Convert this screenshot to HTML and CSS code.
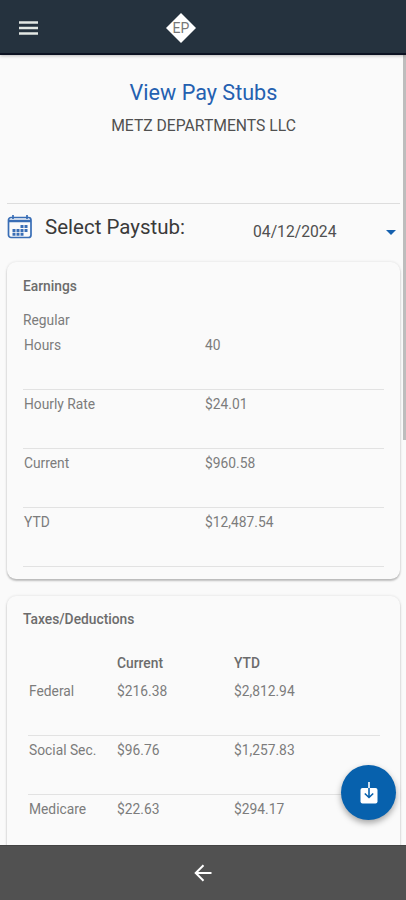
FILE: index.html
```html
<!DOCTYPE html>
<html lang="en">
<head>
    <meta charset="UTF-8">
    <title>View Pay Stubs</title>
    <link rel="stylesheet" href="styles.css">
</head>
<body>
    <div class="app">
        <header class="topbar">
            <svg class="menu" viewBox="0 0 19 14"><path d="M0 1.5h19M0 7h19M0 12.5h19"/></svg>
            <svg class="logo" viewBox="0 0 32 32">
                <path d="M16 1L31 16 16 31 1 16z"/>
                <text x="16" y="21" text-anchor="middle">EP</text>
            </svg>
        </header>

        <main class="page">
            <div class="heading">
                <h1>View Pay Stubs</h1>
                <p>METZ DEPARTMENTS LLC</p>
            </div>

            <div class="select">
                <svg class="calendar" viewBox="0 0 25 24">
                    <rect class="frame" x="1.5" y="2.5" width="22.500" height="20" rx="2.5"/>
                    <path class="bar" d="M2 6h22"/>
                    <path class="frame" d="M6 0v4M20 0v4"/>
                    <path class="days" d="M13.500 11.500h7M5.500 15.500h15M5.500 19.200h11"/>
                </svg>
                <span class="label">Select Paystub:</span>
                <span class="date">04/12/2024</span>
                <span class="arrow"></span>
            </div>

            <section class="card earnings">
                <h2>Earnings</h2>
                <p class="type">Regular</p>
                <div class="row"><span>Hours</span><span>40</span></div>
                <div class="row"><span>Hourly Rate</span><span>$24.01</span></div>
                <div class="row"><span>Current</span><span>$960.58</span></div>
                <div class="row"><span>YTD</span><span>$12,487.54</span></div>
            </section>

            <section class="card taxes">
                <h2>Taxes/Deductions</h2>
                <div class="row head"><span></span><span>Current</span><span>YTD</span></div>
                <div class="row"><span>Federal</span><span>$216.38</span><span>$2,812.94</span></div>
                <div class="row"><span>Social Sec.</span><span>$96.76</span><span>$1,257.83</span></div>
                <div class="row"><span>Medicare</span><span>$22.63</span><span>$294.17</span></div>
            </section>

            <div class="scrollbar"></div>
            <a class="download" href="#">
                <svg viewBox="0 0 18 22">
                    <rect x="0.500" y="6" width="17" height="15.500" rx="2"/>
                    <path class="stem" d="M9 0v6"/>
                    <path class="tip" d="M9 6v9M4.800 11.500L9 15.500l4.200-4"/>
                </svg>
            </a>
        </main>

        <footer class="navbar">
            <svg class="back" viewBox="0 0 18 18"><path d="M17.500 9H2M9.500 1.200L1.700 9l7.800 7.800"/></svg>
        </footer>
    </div>
</body>
</html>
```
FILE: styles.css
```css
* {
    box-sizing: border-box;
}
body {
    margin: 0;
    background: #fafafa;
    font-family: Roboto, "Liberation Sans", sans-serif;
    color: #7c7c7c;
}
h1, h2, p {
    margin: 0;
}
.app {
    display: flex;
    flex-direction: column;
    height: 900px;
    overflow: hidden;
}

/* top bar */
.topbar {
    display: flex;
    align-items: center;
    flex: none;
    height: 55px;
    padding: 3px 0 0 19px;
    background: #25323e;
    border-bottom: 2px solid #0c1222;
    box-shadow: 0 1px 3px rgba(0, 0, 0, .25);
    z-index: 1;
}
.menu {
    width: 19px;
    height: 14px;
    stroke: #e3e8e4;
    stroke-width: 2.4;
}
.logo {
    width: 32px;
    height: 32px;
    margin-left: 127px;
}
.logo path {
    fill: #fff;
}
.logo text {
    font-size: 14px;
    fill: #777;
}

/* page */
.page {
    position: relative;
    flex: 1;
    min-height: 0;
    padding: 0 6px 0 7px;
    overflow: hidden;
}
.heading {
    height: 149px;
    padding-top: 24px;
    border-bottom: 1px solid #ddd;
    text-align: center;
}
.heading h1 {
    font-size: 21.6px;
    line-height: 28px;
    font-weight: 400;
    color: #2460b0;
}
.heading p {
    margin-top: 9px;
    font-size: 15.7px;
    line-height: 20px;
    color: #505050;
}
.select {
    display: flex;
    height: 58px;
}
.calendar {
    flex: none;
    width: 25px;
    height: 24px;
    margin-top: 11px;
}
.calendar path,
.calendar rect {
    fill: none;
    stroke: #386db5;
    stroke-width: 1.7;
}
.calendar .bar {
    stroke-width: 2.5;
}
.calendar .days {
    stroke-width: 3;
    stroke-dasharray: 3 1;
}
.label {
    flex: none;
    width: 221px;
    padding: 8px 0 0 13px;
    font-size: 20.5px;
    line-height: 30px;
    color: #3a3a3a;
}
.date {
    flex: 1;
    padding-top: 18px;
    font-size: 15.7px;
    line-height: 20px;
    color: #505050;
}
.arrow {
    width: 0;
    height: 0;
    margin: 26px 4px 0 0;
    border: 5px solid transparent;
    border-top-color: #1560ae;
    border-bottom: 0;
}

/* cards */
.card {
    padding: 0 16px;
    border-radius: 9px;
    background: #fafafa;
    box-shadow: 0 2px 2px rgba(0, 0, 0, .22), 0 0 3px rgba(0, 0, 0, .12);
    font-size: 13.8px;
    line-height: 18px;
}
.card h2 {
    font-size: 13.8px;
    line-height: 18px;
    font-weight: 500;
    color: #6c6c6c;
}
.earnings {
    height: 317px;
    padding-top: 15px;
}
.type {
    margin-top: 16px;
}
.row {
    display: grid;
    grid-template-columns: 181px 1fr;
    height: 59px;
    padding: 5px 0 0 1px;
    border-bottom: 1px solid #e2e2e2;
}
.type + .row {
    height: 61px;
    padding-top: 7px;
}
.taxes {
    height: 400px;
    margin-top: 17px;
    padding-top: 14px;
}
.taxes .row {
    grid-template-columns: 88px 117px 1fr;
    margin: 0 4px 0 5px;
}
.taxes .head {
    height: 49px;
    padding-top: 26px;
    border: 0;
    font-weight: 500;
    color: #6c6c6c;
}

/* floating over the page */
.scrollbar {
    position: absolute;
    top: 0;
    right: 0;
    width: 3px;
    height: 385px;
    background: #bdbdbd;
}
.download {
    position: absolute;
    right: 10px;
    bottom: 25px;
    display: flex;
    align-items: center;
    justify-content: center;
    width: 55px;
    height: 55px;
    border-radius: 50%;
    background: #0761ad;
    box-shadow: 0 3px 6px rgba(0, 0, 0, .35);
}
.download svg {
    width: 18px;
    height: 22px;
}
.download rect {
    fill: #fff;
}
.download path {
    fill: none;
    stroke-width: 1.6;
}
.download .stem {
    stroke: #fff;
}
.download .tip {
    stroke: #0761ad;
}

/* bottom bar */
.navbar {
    display: flex;
    align-items: center;
    justify-content: center;
    flex: none;
    height: 55px;
    border-top: 1px solid #444;
    background: #515151;
}
.back {
    width: 18px;
    height: 18px;
    fill: none;
    stroke: #fff;
    stroke-width: 2;
}
```
